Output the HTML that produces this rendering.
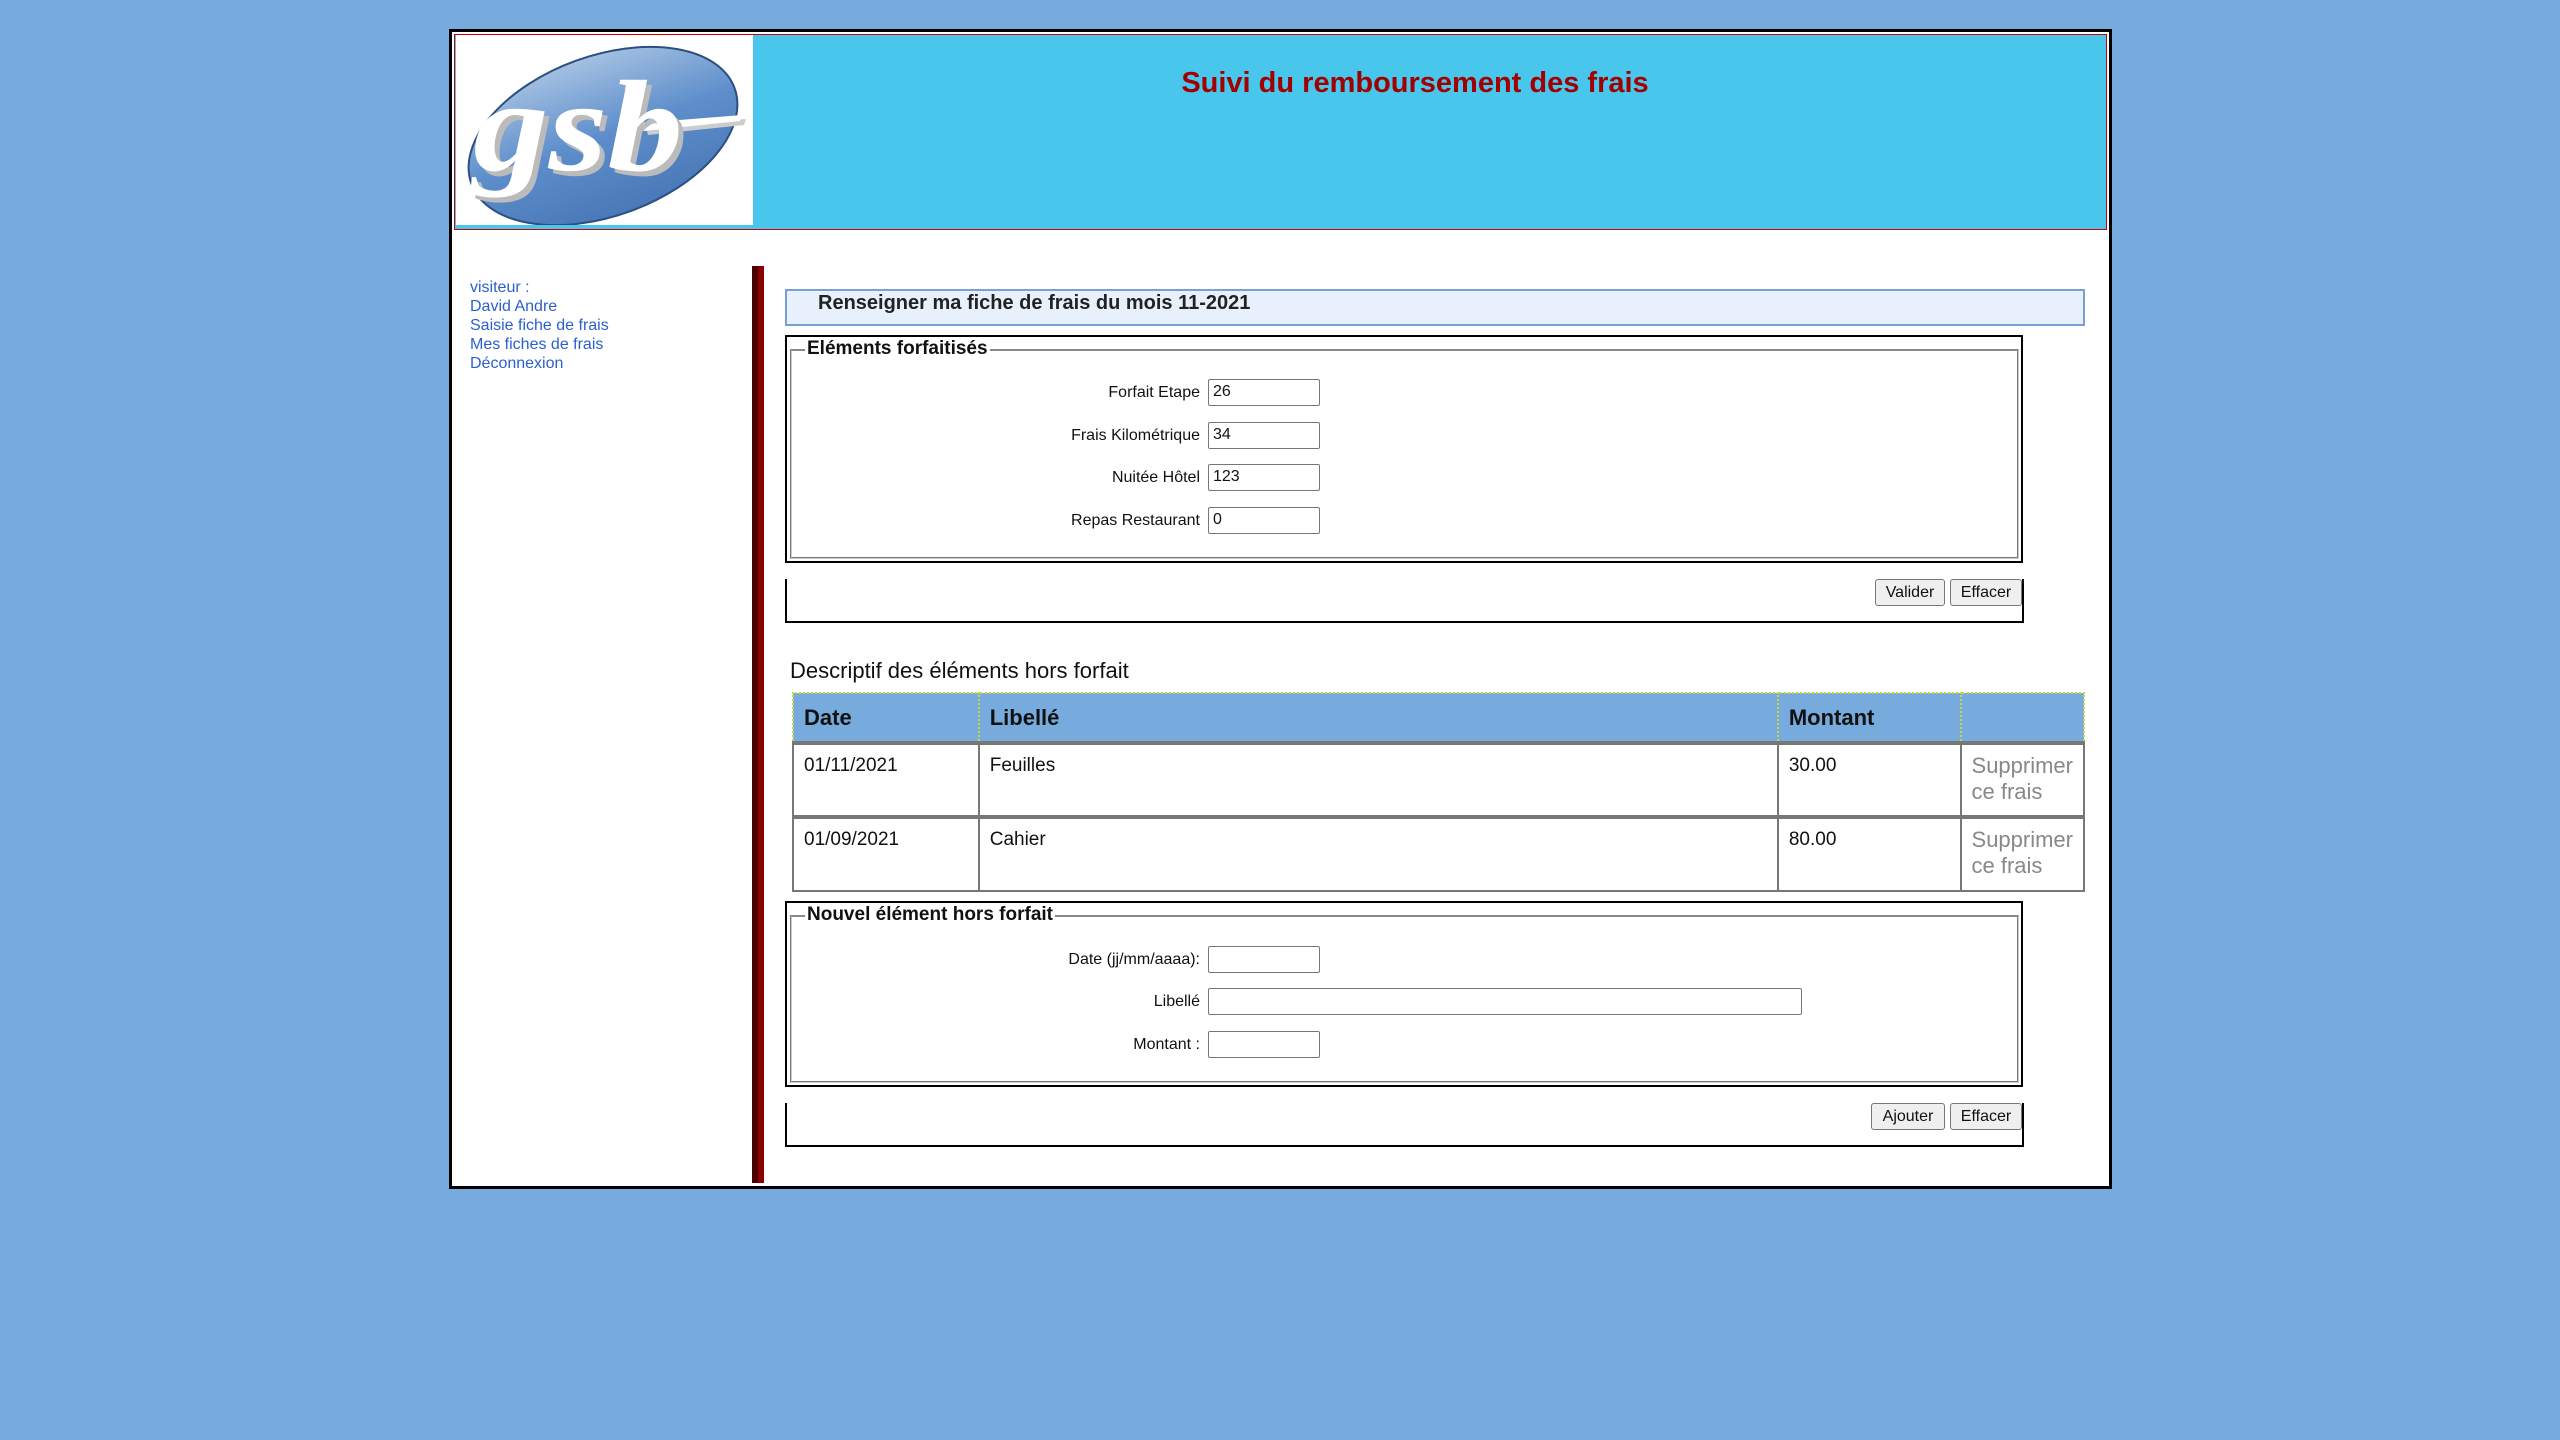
<!DOCTYPE html>
<html><head><meta charset="utf-8"><style>
*{margin:0;padding:0;box-sizing:border-box}
body{width:2560px;height:1440px;background:#77aadd;font-family:"Liberation Sans","DejaVu Sans",sans-serif;position:relative;overflow:hidden}
.a{position:absolute}
#outer{left:449px;top:29px;width:1663px;height:1160px;background:#fff;border:3px solid #000}
#head{left:454px;top:34px;width:1653px;height:196px;background:#48c6ec;border:1px solid #c00}
#logo{left:456px;top:35px;width:297px;height:190px;background:#fff;overflow:hidden}
h1{position:absolute;left:1000px;width:830px;top:67px;text-align:center;color:#a00000;font-size:29px;font-weight:bold}
.side{left:470px;color:#2a5fd0;font-size:16px;line-height:19px}
#bar{left:752px;top:266px;width:12px;height:917px;background:linear-gradient(90deg,#4a0000 0,#4a0000 6px,#8b0000 6px)}
#tbox{left:785px;top:289px;width:1300px;height:37px;background:#e8f0fc;border:2px solid #7a9fd4;font-weight:bold;font-size:20px;color:#222;padding:0 0 0 31px;line-height:24px}
.fs{border:2px solid #000;background:#fff}
.fs .in{position:absolute;left:3px;top:12px;right:2px;bottom:2px;border:2px groove #ccc;border-top:2px solid #888}
.leg{position:absolute;left:18px;top:1px;background:#fff;padding:0 2px;font-weight:bold;font-size:19px;color:#111}
.lab{position:absolute;text-align:right;font-size:16px;color:#111;width:400px}
.inp{position:absolute;height:27px;border:1px solid #777;border-radius:2px;background:#fff;font-size:16px;padding:3px 4px;color:#111}
.bb{border-left:2px solid #000;border-bottom:2px solid #000;border-right:2px solid #000}
.btn{position:absolute;height:27px;background:#efefef;border:1px solid #777;border-radius:3px;font-size:16px;text-align:center;line-height:25px;color:#111}
table{position:absolute;left:792px;top:692px;width:1293px;border-collapse:collapse}
th{background:#77aadd;height:50px;text-align:left;font-size:22px;padding-left:10px;border-top:2px dotted #c8d440;border-right:2px dotted #c8d440;color:#111}
th:first-child{border-left:2px dotted #c8d440}
td{border:2px solid #777;height:74px;vertical-align:top;font-size:19px;padding:10px 10px;color:#111}
td.s{color:#888;font-size:22px;line-height:26px;padding-top:8px}
tr.f td{border-top:4px solid #777}
</style></head><body>
<div id="outer" class="a"></div>
<div id="head" class="a"></div>
<div id="logo" class="a">
<svg width="297" height="190" viewBox="0 0 297 190">
<defs><linearGradient id="g" x1="0" y1="0" x2="0" y2="1"><stop offset="0" stop-color="#a4c0e2"/><stop offset=".5" stop-color="#5d8ecb"/><stop offset="1" stop-color="#4a78b8"/></linearGradient></defs>
<ellipse cx="147" cy="101" rx="140" ry="80" transform="rotate(-20 147 101)" fill="url(#g)" stroke="#2c4f80" stroke-width="2"/>
<path d="M190 92 L290 84 L288 90 L192 100 Z" fill="#ccc"/>
<path d="M186 88 L286 80 L284 86 L188 96 Z" fill="#fff"/>
<text x="22" y="140" textLength="210" lengthAdjust="spacingAndGlyphs" font-family="Liberation Serif,serif" font-style="italic" font-weight="bold" font-size="130" fill="#bbb">gsb</text>
<text x="17" y="135" textLength="210" lengthAdjust="spacingAndGlyphs" font-family="Liberation Serif,serif" font-style="italic" font-weight="bold" font-size="130" fill="#fff">gsb</text>
</svg></div>
<h1>Suivi du remboursement des frais</h1>
<div class="a side" style="top:278px">visiteur :<br>David Andre<br>Saisie fiche de frais<br>Mes fiches de frais<br>Déconnexion</div>
<div id="bar" class="a"></div>
<div id="tbox" class="a">Renseigner ma fiche de frais du mois 11-2021</div>

<div class="a fs" style="left:785px;top:335px;width:1238px;height:228px"><div class="in"></div><div class="leg">Eléments forfaitisés</div></div>
<div class="lab" style="left:800px;top:384px">Forfait Etape</div><div class="inp" style="left:1208px;top:379px;width:112px">26</div>
<div class="lab" style="left:800px;top:427px">Frais Kilométrique</div><div class="inp" style="left:1208px;top:422px;width:112px">34</div>
<div class="lab" style="left:800px;top:469px">Nuitée Hôtel</div><div class="inp" style="left:1208px;top:464px;width:112px">123</div>
<div class="lab" style="left:800px;top:512px">Repas Restaurant</div><div class="inp" style="left:1208px;top:507px;width:112px">0</div>
<div class="a bb" style="left:785px;top:579px;width:1239px;height:44px"></div>
<div class="btn" style="left:1875px;top:579px;width:70px">Valider</div>
<div class="btn" style="left:1950px;top:579px;width:72px">Effacer</div>

<div class="a" style="left:790px;top:658px;font-size:22px;color:#111">Descriptif des éléments hors forfait</div>
<table>
<tr><th style="width:186px">Date</th><th style="width:802px">Libellé</th><th style="width:183px">Montant</th><th></th></tr>
<tr class="f"><td>01/11/2021</td><td>Feuilles</td><td>30.00</td><td class="s">Supprimer ce frais</td></tr>
<tr class="f"><td>01/09/2021</td><td>Cahier</td><td>80.00</td><td class="s">Supprimer ce frais</td></tr>
</table>

<div class="a fs" style="left:785px;top:901px;width:1238px;height:186px"><div class="in"></div><div class="leg">Nouvel élément hors forfait</div></div>
<div class="lab" style="left:800px;top:951px">Date (jj/mm/aaaa):</div><div class="inp" style="left:1208px;top:946px;width:112px"></div>
<div class="lab" style="left:800px;top:993px">Libellé</div><div class="inp" style="left:1208px;top:988px;width:594px"></div>
<div class="lab" style="left:800px;top:1036px">Montant :</div><div class="inp" style="left:1208px;top:1031px;width:112px"></div>
<div class="a bb" style="left:785px;top:1103px;width:1239px;height:44px"></div>
<div class="btn" style="left:1871px;top:1103px;width:74px">Ajouter</div>
<div class="btn" style="left:1950px;top:1103px;width:72px">Effacer</div>
</body></html>
